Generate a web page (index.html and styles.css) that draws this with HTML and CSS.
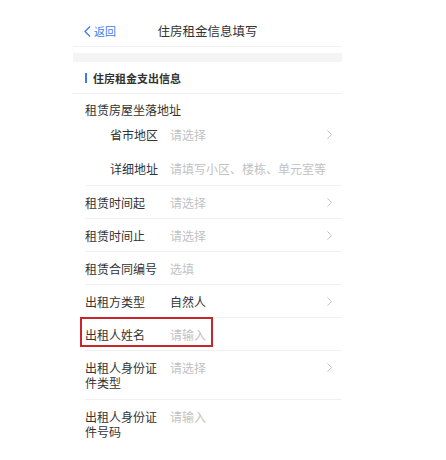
FILE: index.html
```html
<!DOCTYPE html>
<html lang="zh-CN">
<head>
    <meta charset="UTF-8">
    <meta name="viewport" content="width=device-width, initial-scale=1.0">
    <title>住房租金信息填写</title>
    <link rel="stylesheet" href="styles.css">
</head>
<body>

<div class="screen">
    <div class="nav">
        <a class="back">
            <svg width="7" height="11" viewBox="0 0 7 11"><polyline points="6,0.5 1,5.5 6,10.5" fill="none" stroke="#3a7bf0" stroke-width="1.3"/></svg>
            返回
        </a>
        <div class="nav-title">住房租金信息填写</div>
    </div>
    <div class="band"></div>

    <div class="section-head"><span class="bar"></span>住房租金支出信息</div>

    <div class="address">
        <div class="address-label">租赁房屋坐落地址</div>
        <div class="sub-row">
            <span class="sub-label">省市地区</span>
            <span class="value hint">请选择</span>
            <span class="arrow"><svg width="5" height="9" viewBox="0 0 5 9"><polyline points="0.5,0.5 4.5,4.5 0.5,8.5" fill="none" stroke="#c4c4c4" stroke-width="1"/></svg></span>
        </div>
        <div class="sub-row">
            <span class="sub-label">详细地址</span>
            <span class="value hint">请填写小区、楼栋、单元室等</span>
        </div>
    </div>

    <div class="row">
        <span class="label">租赁时间起</span>
        <span class="value hint">请选择</span>
        <span class="arrow"><svg width="5" height="9" viewBox="0 0 5 9"><polyline points="0.5,0.5 4.5,4.5 0.5,8.5" fill="none" stroke="#c4c4c4" stroke-width="1"/></svg></span>
    </div>
    <div class="row">
        <span class="label">租赁时间止</span>
        <span class="value hint">请选择</span>
        <span class="arrow"><svg width="5" height="9" viewBox="0 0 5 9"><polyline points="0.5,0.5 4.5,4.5 0.5,8.5" fill="none" stroke="#c4c4c4" stroke-width="1"/></svg></span>
    </div>
    <div class="row">
        <span class="label">租赁合同编号</span>
        <span class="value hint">选填</span>
    </div>
    <div class="row">
        <span class="label">出租方类型</span>
        <span class="value">自然人</span>
        <span class="arrow"><svg width="5" height="9" viewBox="0 0 5 9"><polyline points="0.5,0.5 4.5,4.5 0.5,8.5" fill="none" stroke="#c4c4c4" stroke-width="1"/></svg></span>
    </div>
    <div class="row marked">
        <span class="label">出租人姓名</span>
        <span class="value hint">请输入</span>
        <span class="mark"></span>
    </div>
    <div class="row tall">
        <span class="label">出租人身份证件类型</span>
        <span class="value hint">请选择</span>
        <span class="arrow"><svg width="5" height="9" viewBox="0 0 5 9"><polyline points="0.5,0.5 4.5,4.5 0.5,8.5" fill="none" stroke="#c4c4c4" stroke-width="1"/></svg></span>
    </div>
    <div class="row tall">
        <span class="label">出租人身份证件号码</span>
        <span class="value hint">请输入</span>
    </div>
</div>

</body>
</html>
```

FILE: styles.css
```css
body {
    margin: 0;
    background-color: #fff;
    font-family: "Noto Sans CJK SC", "Noto Sans", sans-serif;
    color: #333;
}
.screen {
    width: 269px;
    margin-left: 73px;
}
.nav {
    position: relative;
    height: 23px;
    padding-top: 23px;
    border-bottom: 1px solid #f0f0f0;
    display: flex;
    align-items: flex-start;
}
.back {
    display: flex;
    align-items: center;
    gap: 3px;
    margin-left: 11px;
    height: 16px;
    font-size: 11px;
    color: #3a7bf0;
}
.nav-title {
    position: absolute;
    left: 0;
    right: 0;
    top: 23px;
    line-height: 16px;
    text-align: center;
    font-size: 12.5px;
    color: #333;
    pointer-events: none;
}
.band {
    height: 9px;
    margin-top: 6px;
    background-color: #f4f4f4;
}
.section-head {
    height: 31px;
    display: flex;
    align-items: center;
    padding-left: 12px;
    font-size: 11px;
    font-weight: bold;
    color: #333;
    border-bottom: 1px solid #f0f0f0;
}
.bar {
    width: 2px;
    height: 10px;
    background-color: #3a7bf0;
    margin-right: 6px;
}
.address {
    margin-left: 12px;
    padding-top: 9px;
    font-size: 12px;
}
.address-label {
    line-height: 14px;
}
.sub-row {
    height: 34px;
    display: flex;
    align-items: center;
}
.sub-label {
    width: 60px;
    padding-left: 25px;
}
.row {
    position: relative;
    margin-left: 12px;
    height: 32px;
    border-top: 1px solid #f0f0f0;
    display: flex;
    align-items: center;
    font-size: 12px;
}
.row.tall {
    align-items: flex-start;
    padding-top: 9px;
    box-sizing: border-box;
    height: 49px;
    line-height: 15px;
}
.label {
    flex: 0 0 75px;
    padding-right: 10px;
}
.value {
    flex: 1;
    color: #333;
}
.hint {
    color: #c2c2c2;
}
.arrow {
    width: 5px;
    margin-right: 10px;
    display: flex;
    align-items: center;
}
.row.tall .arrow {
    height: 15px;
}
.mark {
    position: absolute;
    left: -5px;
    top: -1px;
    width: 129px;
    height: 26px;
    border: 2px solid #c8262c;
}
```
